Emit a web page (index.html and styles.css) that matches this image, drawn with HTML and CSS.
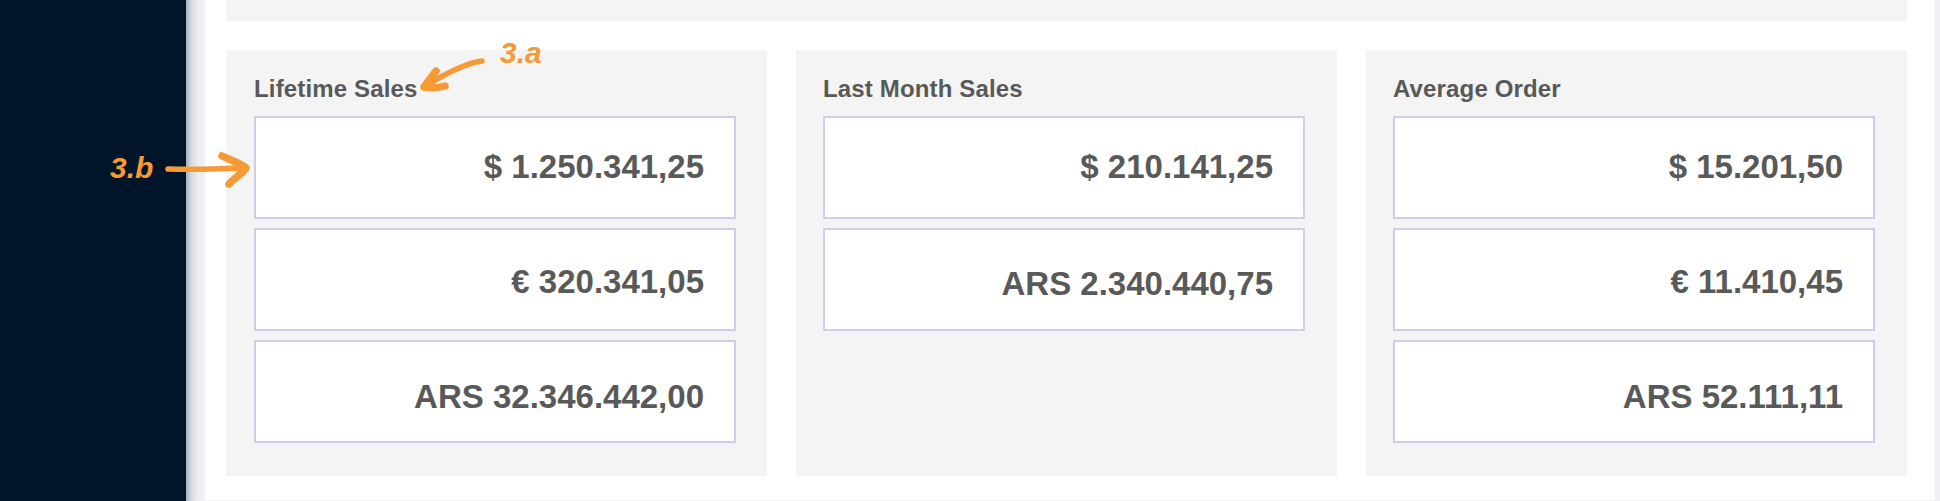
FILE: index.html
```html
<!DOCTYPE html>
<html lang="en">
<head>
  <meta charset="UTF-8">
  <title>Sales Summary</title>
  <link rel="stylesheet" href="styles.css">
</head>
<body>
  <div class="layout">
    <aside class="sidebar"></aside>
    <div class="gutter"></div>

    <main class="content">
      <div class="top-panel"></div>

      <div class="stats">
        <section class="stat-card">
          <h3>Lifetime Sales</h3>
          <div class="amount">$ 1.250.341,25</div>
          <div class="amount low">€ 320.341,05</div>
          <div class="amount lowest">ARS 32.346.442,00</div>
        </section>

        <section class="stat-card">
          <h3>Last Month Sales</h3>
          <div class="amount">$ 210.141,25</div>
          <div class="amount lower">ARS 2.340.440,75</div>
        </section>

        <section class="stat-card">
          <h3>Average Order</h3>
          <div class="amount">$ 15.201,50</div>
          <div class="amount low">€ 11.410,45</div>
          <div class="amount lowest">ARS 52.111,11</div>
        </section>
      </div>
    </main>

    <!-- annotations drawn over the screen -->
    <span class="note note-a">3.a</span>
    <svg class="arrow arrow-a" width="80" height="60" viewBox="0 0 80 60">
      <path class="shaft" d="M64 14 C50 16 28 26 6 40" />
      <path d="M18 24 L6 40 C13 41 20 41 27 39" />
    </svg>

    <span class="note note-b">3.b</span>
    <svg class="arrow arrow-b" width="100" height="50" viewBox="0 0 100 50">
      <path class="shaft" d="M10 24 C35 25 60 24 87 23" />
      <path d="M64 11 C72 15 82 18 88 23 C83 30 76 33 71 39" />
    </svg>
  </div>
</body>
</html>
```

FILE: styles.css
```css
* {
  box-sizing: border-box;
}

html, body {
  margin: 0;
  height: 100%;
  overflow: hidden;
}

body {
  font-family: "Liberation Sans", Arial, sans-serif;
  background: #eff1f5;
  color: #595959;
}

.layout {
  position: relative;
  display: flex;
  height: 501px;
  padding-right: 5px;
}

.sidebar {
  width: 186px;
  background: #001529;
}

.gutter {
  width: 19px;
  background: linear-gradient(to right, #a9acb3 0, #d5d8dd 5px, #eceef2 12px, #eff1f5 100%);
}

.content {
  flex: 1;
  height: 500px;
  background: #fff;
  padding: 0 28px 0 21px;
}

.top-panel {
  height: 21px;
  background: #f4f4f4;
  margin-bottom: 29px;
}

.stats {
  display: grid;
  grid-template-columns: repeat(3, 1fr);
  gap: 29px;
}

.stat-card {
  height: 426px;
  background: #f4f4f4;
  padding: 25px 32px 0 27px;
}

.stat-card:first-child {
  padding-left: 28px;
  padding-right: 31px;
}

.stat-card h3 {
  margin: 0 0 13px;
  font-size: 24px;
  line-height: 28px;
  letter-spacing: 0.15px;
  font-weight: bold;
}

.amount {
  height: 103px;
  margin-bottom: 9px;
  padding: 0 30px 2px 0;
  display: flex;
  align-items: center;
  justify-content: flex-end;
  background: #fff;
  border: 2px solid #cfcee6;
  font-size: 33px;
  font-weight: bold;
}

.amount.low {
  padding-top: 4px;
  padding-bottom: 0;
}

.amount.lower {
  padding-top: 8px;
  padding-bottom: 0;
}

.amount.lowest {
  padding-top: 10px;
  padding-bottom: 0;
}

.note {
  position: absolute;
  font-size: 30px;
  line-height: 34px;
  font-weight: bold;
  font-style: italic;
  color: #f59a35;
}

.note-a {
  left: 500px;
  top: 36px;
}

.note-b {
  left: 110px;
  top: 151px;
}

.arrow {
  position: absolute;
  fill: none;
  stroke: #f59a35;
  stroke-width: 7.5;
  stroke-linecap: round;
  stroke-linejoin: round;
}

.arrow .shaft {
  stroke-width: 5.5;
}

.arrow-a {
  left: 418px;
  top: 47px;
}

.arrow-b {
  left: 158px;
  top: 145px;
}
```
